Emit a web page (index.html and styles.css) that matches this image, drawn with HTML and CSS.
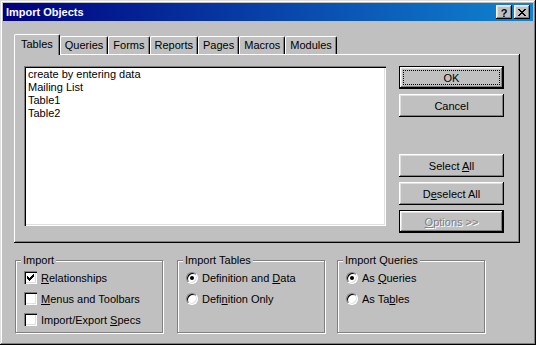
FILE: index.html
```html
<!DOCTYPE html>
<html lang="en">
<head>
    <meta charset="UTF-8">
    <title>Import Objects</title>
    <link rel="stylesheet" href="styles.css">
</head>
<body>
    <div class="window">
        <div class="titlebar">
            <span class="title">Import Objects</span>
            <div class="title-btn title-help">?</div>
            <div class="title-btn">
                <svg width="8" height="7" viewBox="0 0 8 7" shape-rendering="crispEdges">
                    <path d="M0 0h2v1h-2zM6 0h2v1h-2zM1 1h2v1h-2zM5 1h2v1h-2zM2 2h4v1h-4zM3 3h2v1h-2zM2 4h4v1h-4zM1 5h2v1h-2zM5 5h2v1h-2zM0 6h2v1h-2zM6 6h2v1h-2z" fill="#000"/>
                </svg>
            </div>
        </div>
        <div class="content">
            <div class="tabs">
                <div class="tab tab-active">Tables</div>
                <div class="tab">Queries</div>
                <div class="tab">Forms</div>
                <div class="tab">Reports</div>
                <div class="tab">Pages</div>
                <div class="tab">Macros</div>
                <div class="tab">Modules</div>
            </div>
            <div class="panel">
                <div class="listbox">
                    <div class="list-item">create by entering data</div>
                    <div class="list-item">Mailing List</div>
                    <div class="list-item">Table1</div>
                    <div class="list-item">Table2</div>
                </div>
                <div class="buttons">
                    <div class="btn btn-default btn-focus"><span>OK</span></div>
                    <div class="btn"><span>Cancel</span></div>
                    <div class="btn btn-select"><span>Select <u>A</u>ll</span></div>
                    <div class="btn"><span>D<u>e</u>select All</span></div>
                    <div class="btn btn-default btn-disabled"><span><u>O</u>ptions &gt;&gt;</span></div>
                </div>
            </div>
            <div class="groups">
                <div class="group">
                    <span class="group-label">Import</span>
                    <div class="option">
                        <span class="checkbox">
                            <svg width="7" height="7" viewBox="0 0 7 7" shape-rendering="crispEdges">
                                <path d="M6 0h1v1h-1zM5 1h2v1h-2zM0 2h1v1h-1zM4 2h3v1h-3zM0 3h2v1h-2zM3 3h3v1h-3zM0 4h5v1h-5zM1 5h3v1h-3zM2 6h1v1h-1z" fill="#000"/>
                            </svg>
                        </span>
                        <span><u>R</u>elationships</span>
                    </div>
                    <div class="option">
                        <span class="checkbox"></span>
                        <span><u>M</u>enus and Toolbars</span>
                    </div>
                    <div class="option">
                        <span class="checkbox"></span>
                        <span>Import/Export <u>S</u>pecs</span>
                    </div>
                </div>
                <div class="group group-tables">
                    <span class="group-label">Import Tables</span>
                    <div class="option">
                        <span class="radio radio-on"></span>
                        <span>Definition and <u>D</u>ata</span>
                    </div>
                    <div class="option">
                        <span class="radio"></span>
                        <span>Defi<u>n</u>ition Only</span>
                    </div>
                </div>
                <div class="group group-queries">
                    <span class="group-label">Import Queries</span>
                    <div class="option">
                        <span class="radio radio-on"></span>
                        <span>As <u>Q</u>ueries</span>
                    </div>
                    <div class="option">
                        <span class="radio"></span>
                        <span>As Ta<u>b</u>les</span>
                    </div>
                </div>
            </div>
        </div>
    </div>
</body>
</html>
```

FILE: styles.css
```css
body {
    margin: 0;
    font-family: "Liberation Sans", Arial, sans-serif;
    font-size: 11px;
    color: #000;
}
.window {
    width: 536px;
    height: 345px;
    box-sizing: border-box;
    padding: 3px;
    background: #c0c0c0;
    box-shadow: inset -1px -1px #000, inset 1px 1px #dfdfdf, inset -2px -2px #808080, inset 2px 2px #fff;
}
.titlebar {
    height: 18px;
    display: flex;
    align-items: center;
    padding: 0 3px 0 3px;
    background: linear-gradient(to right, #000080, #1084d0);
    color: #fff;
    font-weight: bold;
}
.title {
    flex: 1;
}
.title-btn {
    width: 16px;
    height: 14px;
    box-sizing: border-box;
    display: flex;
    align-items: center;
    justify-content: center;
    background: #c0c0c0;
    color: #000;
    box-shadow: inset -1px -1px #000, inset 1px 1px #fff, inset -2px -2px #808080, inset 2px 2px #dfdfdf;
}
.title-btn + .title-btn {
    margin-left: 2px;
}
.title-help {
    font-size: 11px;
    line-height: 14px;
    padding-top: 1px;
}
.content {
    padding: 13px 0 0 11px;
}
.tabs {
    display: flex;
    align-items: flex-end;
    height: 20px;
}
.tab {
    height: 18px;
    box-sizing: border-box;
    padding: 2px 4px 0 4px;
    line-height: 13px;
    border-left: 1px solid #fff;
    border-top: 1px solid #fff;
    border-right: 1px solid #000;
    border-radius: 2px 2px 0 0;
    box-shadow: inset -1px 0 #808080;
}
.tab-active {
    position: relative;
    z-index: 1;
    height: 21px;
    margin-bottom: -1px;
    padding: 3px 6px 0 6px;
    background: #c0c0c0;
}
.panel {
    width: 506px;
    height: 189px;
    box-sizing: border-box;
    display: flex;
    align-items: flex-start;
    padding: 12px 0 0 10px;
    box-shadow: inset -1px -1px #000, inset 1px 1px #fff, inset -2px -2px #808080;
}
.listbox {
    width: 362px;
    height: 160px;
    box-sizing: border-box;
    padding: 2px 4px;
    background: #fff;
    line-height: 13px;
    box-shadow: inset 1px 1px #808080, inset 2px 2px #000, inset -1px -1px #fff, inset -2px -2px #dfdfdf;
}
.buttons {
    width: 105px;
    margin-left: 13px;
}
.btn {
    position: relative;
    height: 23px;
    box-sizing: border-box;
    display: flex;
    align-items: center;
    justify-content: center;
    box-shadow: inset -1px -1px #000, inset 1px 1px #fff, inset -2px -2px #808080, inset 2px 2px #dfdfdf;
}
.btn + .btn {
    margin-top: 5px;
}
.buttons .btn-select {
    margin-top: 37px;
}
.btn-default {
    border: 1px solid #000;
}
.btn-focus::after {
    content: "";
    position: absolute;
    top: 3px;
    left: 3px;
    right: 3px;
    bottom: 3px;
    border: 1px dotted #000;
}
.btn-disabled {
    color: #808080;
    text-shadow: 1px 1px 0 #fff;
}
.groups {
    display: flex;
    margin-top: 17px;
    margin-left: 1px;
}
.group {
    position: relative;
    width: 148px;
    height: 73px;
    box-sizing: border-box;
    padding: 10px 0 0 8px;
    border: 1px solid #808080;
    box-shadow: 1px 1px 0 #fff, inset 1px 1px 0 #fff;
}
.group-tables {
    margin-left: 14px;
}
.group-queries {
    margin-left: 12px;
}
.group-label {
    position: absolute;
    top: -7px;
    left: 5px;
    padding: 0 2px;
    line-height: 13px;
    background: #c0c0c0;
}
.option {
    display: flex;
    align-items: center;
    height: 13px;
    margin-bottom: 8px;
}
.checkbox {
    width: 13px;
    height: 13px;
    box-sizing: border-box;
    display: flex;
    align-items: center;
    justify-content: center;
    margin-right: 4px;
    background: #fff;
    box-shadow: inset 1px 1px #808080, inset 2px 2px #000, inset -1px -1px #fff, inset -2px -2px #dfdfdf;
}
.radio {
    position: relative;
    width: 12px;
    height: 12px;
    box-sizing: border-box;
    margin-right: 4px;
    border-radius: 50%;
    background: #fff;
    border: 1px solid;
    border-color: #808080 #fff #fff #808080;
    box-shadow: inset 1px 1px 0 #000, inset -1px -1px 0 #dfdfdf;
}
.radio-on::after {
    content: "";
    position: absolute;
    top: 3px;
    left: 3px;
    width: 4px;
    height: 4px;
    border-radius: 50%;
    background: #000;
}
```
